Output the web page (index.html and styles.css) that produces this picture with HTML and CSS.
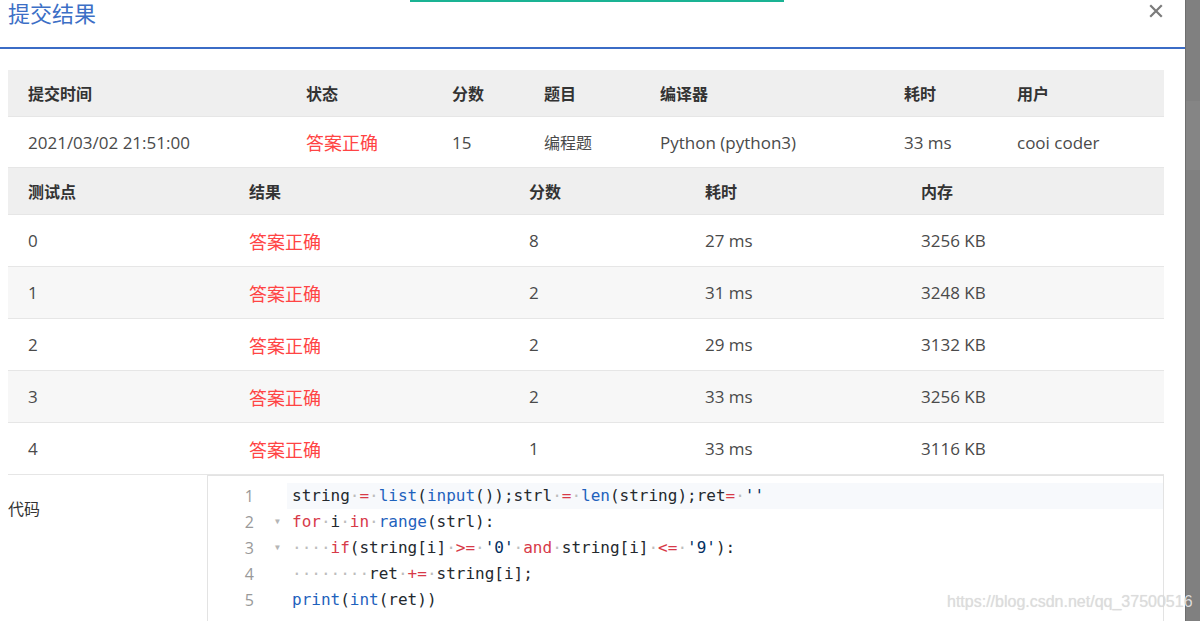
FILE: index.html
```html
<!DOCTYPE html>
<html lang="zh-CN">
<head>
<meta charset="utf-8">
<title>提交结果</title>
<link rel="stylesheet" href="styles.css">
</head>
<body>
<div class="page">
  <div class="dialog">
    <div class="toast-bar"></div>
    <header class="dlg-head">
      <h1 class="dlg-title">提交结果</h1>
      <button class="close" aria-label="关闭">
        <svg width="14" height="14" viewBox="0 0 14 14"><path d="M2 2 L12 12 M12 2 L2 12" stroke="#7b7b7b" stroke-width="2.2" stroke-linecap="square" fill="none"/></svg>
      </button>
    </header>
    <div class="dlg-body">
      <div class="grid g1 head">
        <div class="th">提交时间</div><div class="th">状态</div><div class="th">分数</div><div class="th">题目</div><div class="th">编译器</div><div class="th">耗时</div><div class="th">用户</div>
      </div>
      <div class="grid g1 data first">
        <div class="td">2021/03/02 21:51:00</div><div class="td ok">答案正确</div><div class="td">15</div><div class="td cjk">编程题</div><div class="td">Python (python3)</div><div class="td">33 ms</div><div class="td">cooi coder</div>
      </div>
      <div class="grid g2 head">
        <div class="th">测试点</div><div class="th">结果</div><div class="th">分数</div><div class="th">耗时</div><div class="th">内存</div>
      </div>
      <div class="grid g2 data">
        <div class="td">0</div><div class="td ok">答案正确</div><div class="td">8</div><div class="td">27 ms</div><div class="td">3256 KB</div>
      </div>
      <div class="grid g2 data alt">
        <div class="td">1</div><div class="td ok">答案正确</div><div class="td">2</div><div class="td">31 ms</div><div class="td">3248 KB</div>
      </div>
      <div class="grid g2 data">
        <div class="td">2</div><div class="td ok">答案正确</div><div class="td">2</div><div class="td">29 ms</div><div class="td">3132 KB</div>
      </div>
      <div class="grid g2 data alt">
        <div class="td">3</div><div class="td ok">答案正确</div><div class="td">2</div><div class="td">33 ms</div><div class="td">3256 KB</div>
      </div>
      <div class="grid g2 data">
        <div class="td">4</div><div class="td ok">答案正确</div><div class="td">1</div><div class="td">33 ms</div><div class="td">3116 KB</div>
      </div>
      <div class="code-row">
        <div class="code-label">代码</div>
        <div class="code-box">
          <div class="ln active"><span class="num">1</span><span class="fold"></span><span class="src">string<span class="w">·</span><span class="k">=</span><span class="w">·</span><span class="b">list</span>(<span class="b">input</span>());strl<span class="w">·</span><span class="k">=</span><span class="w">·</span><span class="b">len</span>(string);ret<span class="k">=</span><span class="w">·</span><span class="s">''</span></span></div>
          <div class="ln"><span class="num">2</span><span class="fold">▼</span><span class="src"><span class="k">for</span><span class="w">·</span>i<span class="w">·</span><span class="k">in</span><span class="w">·</span><span class="b">range</span>(strl):</span></div>
          <div class="ln"><span class="num">3</span><span class="fold">▼</span><span class="src"><span class="w">····</span><span class="k">if</span>(string[i]<span class="w">·</span><span class="k">&gt;=</span><span class="w">·</span><span class="s">'0'</span><span class="w">·</span><span class="k">and</span><span class="w">·</span>string[i]<span class="w">·</span><span class="k">&lt;=</span><span class="w">·</span><span class="s">'9'</span>):</span></div>
          <div class="ln"><span class="num">4</span><span class="fold"></span><span class="src"><span class="w">········</span>ret<span class="w">·</span><span class="k">+=</span><span class="w">·</span>string[i];</span></div>
          <div class="ln"><span class="num">5</span><span class="fold"></span><span class="src"><span class="b">print</span>(<span class="b">int</span>(ret))</span></div>
        </div>
      </div>
    </div>
  </div>
  <div class="scrollbar"><div class="thumb"></div></div>
  <div class="watermark">https://blog.csdn.net/qq_37500516</div>
</div>
</body>
</html>
```
FILE: styles.css
```css
html, body {
  margin: 0;
  padding: 0;
  height: 100%;
  overflow: hidden;
  background: #fff;
}
body {
  font-family: "Open Sans", "Noto Sans CJK SC", sans-serif;
  color: #333;
}
.page {
  display: flex;
  height: 621px;
  position: relative;
}
.dialog {
  flex: 1;
  position: relative;
  min-width: 0;
}
.toast-bar {
  position: absolute;
  top: 0;
  left: 410px;
  width: 374px;
  height: 2px;
  background: #1ab394;
}
.dlg-head {
  height: 47px;
  border-bottom: 2px solid #3b6cc6;
  display: flex;
  justify-content: space-between;
  align-items: flex-start;
  padding: 0 22px 0 8px;
}
.dlg-title {
  margin: 0;
  font-family: "Noto Sans CJK SC", sans-serif;
  font-weight: 400;
  font-size: 22px;
  line-height: 24px;
  color: #3c6fc6;
}
.close {
  border: 0;
  background: none;
  padding: 0;
  margin-top: 4px;
  width: 14px;
  height: 14px;
  display: flex;
}
.dlg-body {
  padding: 21px 21px 0 8px;
}
.grid {
  display: grid;
  align-items: center;
  border-bottom: 1px solid #e6e6e6;
  box-sizing: border-box;
}
.g1 { grid-template-columns: 278px 146px 92px 116px 244px 113px 168px; }
.g2 { grid-template-columns: 221px 280px 176px 216px 264px; }
.head {
  height: 47px;
  background: #efefef;
}
.data {
  height: 52px;
  background: #fff;
}
.data.first { height: 51px; }
.data.alt { background: #f7f7f7; }
.th {
  padding-left: 20px;
  font-family: "Noto Sans CJK SC", sans-serif;
  font-weight: 700;
  font-size: 16px;
  color: #333;
}
.td {
  padding-left: 20px;
  font-size: 17px;
  color: #4a4a4a;
  white-space: nowrap;
}
.td.cjk {
  font-family: "Noto Sans CJK SC", sans-serif;
  font-size: 16px;
}
.td.ok {
  font-family: "Noto Sans CJK SC", sans-serif;
  font-size: 18px;
  color: #ff4444;
}
.code-row {
  display: flex;
}
.code-label {
  width: 199px;
  padding-top: 21px;
  font-family: "Noto Sans CJK SC", sans-serif;
  font-size: 16px;
  line-height: 24px;
  color: #333;
}
.code-box {
  flex: 1;
  border: 1px solid #e3e3e3;
  border-bottom: 0;
  height: 160px;
  padding-top: 7px;
  font-family: "DejaVu Sans Mono", monospace;
  font-size: 16px;
}
.ln {
  display: flex;
  height: 26px;
  line-height: 26px;
}
.num {
  width: 46px;
  text-align: right;
  color: #999;
  font-family: "Open Sans", sans-serif;
  font-size: 16px;
}
.fold {
  width: 33px;
  padding-left: 21px;
  box-sizing: border-box;
  color: #b5b5b5;
  font-size: 8px;
}
.src {
  flex: 1;
  padding-left: 5px;
  color: #24292e;
  white-space: pre;
}
.ln.active .src { background: #f7f9fc; }
.k { color: #d73a49; }
.b { color: #1f62bd; }
.s { color: #032f62; }
.w { color: #bdbdbd; }
.scrollbar {
  width: 14px;
  background: #808080;
  border-left: 1px solid #6e6e6e;
  position: relative;
}
.thumb {
  margin-top: 101px;
  height: 69px;
  background: #858585;
}
.watermark {
  position: absolute;
  left: 947px;
  top: 592px;
  font-family: "Liberation Sans", Arial, sans-serif;
  font-size: 16px;
  line-height: 20px;
  color: #dcdcdc;
  text-shadow: 0 0 1px rgba(0,0,0,0.12);
  white-space: nowrap;
}
```
